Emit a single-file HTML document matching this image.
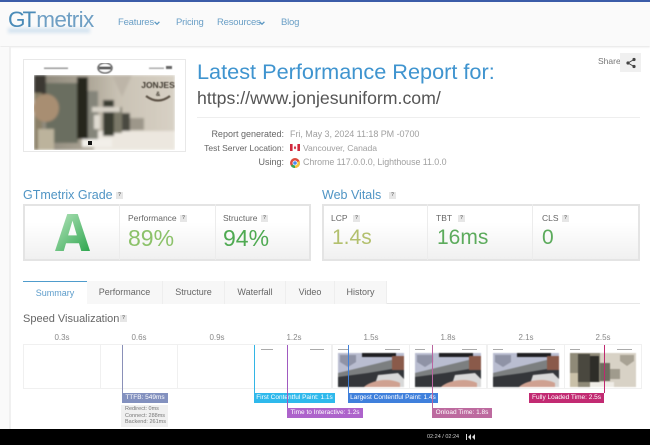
<!DOCTYPE html>
<html><head><meta charset="utf-8">
<style>
*{box-sizing:border-box}
html,body{margin:0;padding:0;background:#fff}
body{width:650px;height:445px;position:relative;overflow:hidden;font-family:"Liberation Sans",sans-serif;color:#555;filter:blur(.3px)}
.a{position:absolute;white-space:nowrap}
.q{position:absolute;width:7px;height:7px;background:#e6e6e6;color:#777;font-size:5px;line-height:7px;text-align:center;font-weight:bold}
.nav{color:#6a9fc6;font-size:9.5px;top:17px;line-height:12px;letter-spacing:-.2px}
.lab{font-size:9px;color:#666;text-align:right;right:366px;line-height:12px}
.val{font-size:9px;color:#a0a0a0;line-height:12px;letter-spacing:-.05px}
.box{position:absolute;top:204px;height:57px;border:2px solid #e4e4e4;background:linear-gradient(#fff 30%,#f0f0f0)}
.sep{position:absolute;top:204px;width:1px;height:56px;background:#ececec}
.h{font-size:12.5px;color:#4f94c4;line-height:16px;top:187px}
.sm{font-size:8.5px;color:#666;line-height:11px;top:213px}
.big{font-size:23px;line-height:26px;top:225px}
.bv{font-size:21px}
.tab{position:absolute;top:281px;height:23px;background:#f7f7f7;border-right:1px solid #eee;font-size:9px;color:#666;text-align:center;line-height:23px}
.t{font-size:8px;color:#888;top:333px;line-height:10px;text-align:center;width:30px}
.f{position:absolute;top:345px;height:43px;width:76px;background:#fff;outline:1px solid #f0f0f0;overflow:hidden}
.lg{position:absolute;width:1px}
.lb{position:absolute;height:10px;color:#fff;font-size:6.5px;line-height:10px;text-align:center;white-space:nowrap;overflow:hidden}
.sv{position:absolute;top:353px;filter:blur(.5px)}
</style></head>
<body>
<div class="a" style="left:0;top:0;width:650px;height:46px;background:#fafafa;box-shadow:0 1px 2px #e2e2e2"></div>
<div class="a" style="left:0;top:0;width:650px;height:2px;background:#3b5ca8"></div>
<div class="a" style="left:0;top:47px;width:11px;height:382px;background:#fafafa;border-right:2px solid #f0f0f0"></div>

<div class="a" style="left:8px;top:28px;width:82px;height:5px;background:#d5e4f0;filter:blur(1.5px)"></div>
<div class="a" style="left:8px;top:6px;font-size:22.5px;line-height:28px;color:#6f9fc4;letter-spacing:-.65px"><span style="color:#4a8bb8;letter-spacing:-3px">GT</span><span style="margin-left:3px">metrix</span></div>

<div class="a nav" style="left:118px">Features</div>
<svg class="a" style="left:154px;top:21px" width="6" height="4" viewBox="0 0 6 4"><path d="M.6.8 3 3.200 5.400.8" fill="none" stroke="#5b97c2" stroke-width="1.3"/></svg>
<div class="a nav" style="left:176px">Pricing</div>
<div class="a nav" style="left:217px">Resources</div>
<svg class="a" style="left:259px;top:21px" width="6" height="4" viewBox="0 0 6 4"><path d="M.6.8 3 3.200 5.400.8" fill="none" stroke="#5b97c2" stroke-width="1.3"/></svg>
<div class="a nav" style="left:281px">Blog</div>

<!-- thumbnail -->
<div class="a" style="left:23px;top:59px;width:163px;height:93px;background:#fff;border:1px solid #e8e8e8"></div>
<svg class="a" style="left:34px;top:63px" width="141" height="87" viewBox="0 0 141 87">
<defs>
<linearGradient id="bg" x1="0" x2="1" y1="0" y2="0"><stop offset="0" stop-color="#8a8578"/><stop offset=".35" stop-color="#a8a192"/><stop offset=".6" stop-color="#c9c2b4"/><stop offset="1" stop-color="#d8d1c5"/></linearGradient>
<filter id="b1"><feGaussianBlur stdDeviation="1.200"/></filter>
<filter id="b2"><feGaussianBlur stdDeviation=".4"/></filter>
<clipPath id="ci"><rect x="0" y="12" width="141" height="75"/></clipPath>
</defs>
<g clip-path="url(#ci)"><g filter="url(#b1)">
<rect x="0" y="12" width="141" height="75" fill="url(#bg)"/>
<rect x="60" y="68" width="81" height="19" fill="#ece7df"/>
<rect x="0" y="12" width="12" height="30" fill="#3b3833"/>
<rect x="12" y="20" width="32" height="60" fill="#6b6e60"/>
<rect x="0" y="30" width="8" height="57" fill="#8a8068"/>
<ellipse cx="12" cy="45" rx="13" ry="14" fill="#a88e72"/>
<rect x="4" y="66" width="16" height="21" fill="#bcb39c"/>
<rect x="43" y="14" width="11" height="62" fill="#25251f"/>
<rect x="54" y="28" width="10" height="48" fill="#85857a"/>
<rect x="69" y="37" width="11" height="36" fill="#3b3c33"/>
<rect x="80" y="44" width="8" height="26" fill="#7a7868"/>
<rect x="88" y="50" width="8" height="18" fill="#4a493f"/>
<rect x="96" y="55" width="14" height="12" fill="#9d978a"/>
<rect x="58" y="44" width="28" height="5" fill="#d8d3c8"/>
<rect x="60" y="52" width="6" height="14" fill="#e0dcd2"/>
<rect x="48" y="76" width="30" height="8" fill="#f2efe9"/>
<path d="M78 12l20 0-10 22z" fill="#bdb5a8"/>
</g>
<rect x="54" y="78" width="4" height="4" fill="#111"/>
<g filter="url(#b2)">
<text x="124" y="25" font-size="8.500" font-weight="bold" fill="#413a30" text-anchor="middle" font-family="Liberation Sans">JONJES</text>
<text x="124" y="33" font-size="6" font-weight="bold" fill="#413a30" text-anchor="middle" font-family="Liberation Sans">&amp;</text>
<path d="M112 33q12 9 24 0" fill="none" stroke="#5d5347" stroke-width="2.200"/>
</g></g>
<g filter="url(#b2)">
<rect x="10" y="4.500" width="24" height="1.500" fill="#999"/><rect x="115" y="4.500" width="15" height="1.500" fill="#aaa"/>
<rect x="132" y="3" width="6" height="3" fill="#666"/>
<ellipse cx="71" cy="5" rx="7" ry="5" fill="#fff" stroke="#666" stroke-width="1.500"/><rect x="65" y="3.500" width="12" height="3" fill="#555"/>
</g>
</svg>

<div class="a" style="left:197px;top:58px;font-size:21.700px;line-height:28px;color:#3f94cf">Latest Performance Report for:</div>
<div class="a" style="left:197px;top:86px;font-size:17.700px;line-height:24px;color:#555">https://www.jonjesuniform.com/</div>
<div class="a" style="left:197px;top:117px;width:443px;height:1px;background:#eee"></div>

<div class="a" style="left:598px;top:56px;font-size:8.500px;line-height:11px;color:#777">Share</div>
<div class="a" style="left:620px;top:53px;width:21px;height:19px;background:#f0f0f0"></div>
<svg class="a" style="left:625px;top:57px" width="12" height="12" viewBox="0 0 12 12"><path d="M9 2.500 3 6l6 3.500" fill="none" stroke="#444" stroke-width="1"/><circle cx="9" cy="2.500" r="1.600" fill="#444"/><circle cx="3" cy="6" r="1.600" fill="#444"/><circle cx="9" cy="9.500" r="1.600" fill="#444"/></svg>

<div class="a lab" style="top:128px">Report generated:</div>
<div class="a lab" style="top:142px;font-size:8.500px">Test Server Location:</div>
<div class="a lab" style="top:156px">Using:</div>
<div class="a val" style="left:290px;top:128px">Fri, May 3, 2024 11:18 PM -0700</div>
<svg class="a" style="left:290px;top:144px" width="10" height="7" viewBox="0 0 10 7"><rect width="10" height="7" fill="#fff"/><rect width="2.600" height="7" fill="#d0283c"/><rect x="7.400" width="2.600" height="7" fill="#d0283c"/><path d="M5 1.500 6.200 4 5 5.500 3.800 4z" fill="#d0283c"/></svg>
<div class="a val" style="left:303px;top:142px;font-size:8.600px">Vancouver, Canada</div>
<svg class="a" style="left:290px;top:158px" width="10" height="10" viewBox="0 0 10 10"><circle cx="5" cy="5" r="5" fill="#dd4b3e"/><path d="M5 5 .8 7.700A5 5 0 0 0 5 10z" fill="#3aa757"/><path d="M5 5 5 10A5 5 0 0 0 9.600 3z" fill="#f5c33b"/><circle cx="5" cy="5" r="2.500" fill="#fff"/><circle cx="5" cy="5" r="1.800" fill="#4a8af0"/></svg>
<div class="a val" style="left:303px;top:156px;font-size:8.900px">Chrome 117.0.0.0, Lighthouse 11.0.0</div>

<!-- grade -->
<div class="a h" style="left:23px">GTmetrix Grade</div>
<div class="q" style="left:116px;top:192px">?</div>
<div class="box" style="left:23px;width:288px"></div>
<div class="sep" style="left:119px"></div>
<div class="sep" style="left:215px"></div>
<svg class="a" style="left:55px;top:213px" width="35" height="39" viewBox="0 0 40 40" preserveAspectRatio="none"><defs><linearGradient id="ga" x1="0" x2="1" y1="0" y2="1"><stop offset="0" stop-color="#b5e4bc"/><stop offset="1" stop-color="#2fa64f"/></linearGradient></defs><path fill-rule="evenodd" d="M14 1h12l14 38H30l-2.600-8H12.600L10 39H0zM15 23h10L20 8z" fill="url(#ga)"/></svg>
<div class="a sm" style="left:128px">Performance</div>
<div class="q" style="left:180px;top:215px">?</div>
<div class="a big" style="left:128px;color:#8cc26a">89%</div>
<div class="a sm" style="left:223px">Structure</div>
<div class="q" style="left:261px;top:215px">?</div>
<div class="a big" style="left:223px;color:#4faa52">94%</div>

<!-- vitals -->
<div class="a h" style="left:322px">Web Vitals</div>
<div class="q" style="left:389px;top:192px">?</div>
<div class="box" style="left:322px;width:318px"></div>
<div class="sep" style="left:427px"></div>
<div class="sep" style="left:532px"></div>
<div class="a sm" style="left:331px">LCP</div>
<div class="q" style="left:353px;top:215px">?</div>
<div class="a big bv" style="left:332px;color:#b3c06e">1.4s</div>
<div class="a sm" style="left:436px">TBT</div>
<div class="q" style="left:458px;top:215px">?</div>
<div class="a big bv" style="left:437px;color:#5cab5c">16ms</div>
<div class="a sm" style="left:542px">CLS</div>
<div class="q" style="left:562px;top:215px">?</div>
<div class="a big bv" style="left:542px;color:#5cab5c">0</div>

<!-- tabs -->
<div class="a" style="left:23px;top:303px;width:617px;height:1px;background:#e6e6e6"></div>
<div class="tab" style="left:87px;width:76px">Performance</div>
<div class="tab" style="left:163px;width:62px">Structure</div>
<div class="tab" style="left:225px;width:61px">Waterfall</div>
<div class="tab" style="left:286px;width:49px">Video</div>
<div class="tab" style="left:335px;width:52px">History</div>
<div class="tab" style="left:23px;width:64px;background:#fff;border:0;border-top:1px solid #4f9ccc;color:#5d9dcb;height:24px">Summary</div>

<div class="a" style="left:23px;top:311px;font-size:11px;line-height:16px;color:#666">Speed Visualization</div>
<div class="q" style="left:120px;top:315px">?</div>

<div class="a t" style="left:47px">0.3s</div>
<div class="a t" style="left:124px">0.6s</div>
<div class="a t" style="left:202px">0.9s</div>
<div class="a t" style="left:279px">1.2s</div>
<div class="a t" style="left:356px">1.5s</div>
<div class="a t" style="left:433px">1.8s</div>
<div class="a t" style="left:511px">2.1s</div>
<div class="a t" style="left:588px">2.5s</div>

<div class="f" style="left:24px"></div>
<div class="f" style="left:101px"></div>
<div class="f" style="left:178px"></div>
<div class="f" style="left:255px"><div class="a" style="left:6px;top:4px;width:12px;height:1px;background:#aaa"></div><div class="a" style="left:55px;top:4px;width:14px;height:1px;background:#aaa"></div></div>
<div class="f" style="left:333px"><div class="a" style="left:5px;top:4px;width:10px;height:1px;background:#aaa"></div><div class="a" style="left:52px;top:4px;width:15px;height:1px;background:#aaa"></div></div>
<div class="f" style="left:410px"><div class="a" style="left:5px;top:4px;width:10px;height:1px;background:#aaa"></div><div class="a" style="left:52px;top:4px;width:15px;height:1px;background:#aaa"></div></div>
<div class="f" style="left:488px"><div class="a" style="left:5px;top:4px;width:10px;height:1px;background:#aaa"></div><div class="a" style="left:52px;top:4px;width:15px;height:1px;background:#aaa"></div></div>
<div class="f" style="left:565px"><div class="a" style="left:5px;top:4px;width:10px;height:1px;background:#aaa"></div><div class="a" style="left:52px;top:4px;width:15px;height:1px;background:#aaa"></div></div>

<svg class="sv" style="left:338px" width="66" height="34" viewBox="0 0 66 34"><rect width="66" height="34" fill="#b9bdd0"/><rect x="24" width="34" height="4" fill="#1f1f22"/><path d="M0 34V20L66 4V34z" fill="#7c7f80"/><path d="M0 34V24L30 20 66 14V34z" fill="#34363a"/><path d="M36 34 40 22 60 20 66 26V34z" fill="#d8d8d8"/><path d="M26 34C32 28 50 24 62 30V34z" fill="#cfa191"/><rect x="54" y="3" width="12" height="14" fill="#8a5a4a"/><path d="M2 2h16v7l-8 5-8-5z" fill="#8f93a6"/></svg>
<svg class="sv" style="left:415px" width="66" height="34" viewBox="0 0 66 34"><rect width="66" height="34" fill="#b9bdd0"/><rect x="24" width="34" height="4" fill="#1f1f22"/><path d="M0 34V20L66 4V34z" fill="#7c7f80"/><path d="M0 34V24L30 20 66 14V34z" fill="#34363a"/><path d="M36 34 40 22 60 20 66 26V34z" fill="#d8d8d8"/><path d="M26 34C32 28 50 24 62 30V34z" fill="#cfa191"/><rect x="54" y="3" width="12" height="14" fill="#8a5a4a"/><path d="M2 2h16v7l-8 5-8-5z" fill="#8f93a6"/></svg>
<svg class="sv" style="left:493px" width="66" height="34" viewBox="0 0 66 34"><rect width="66" height="34" fill="#b9bdd0"/><rect x="24" width="34" height="4" fill="#1f1f22"/><path d="M0 34V20L66 4V34z" fill="#7c7f80"/><path d="M0 34V24L30 20 66 14V34z" fill="#34363a"/><path d="M36 34 40 22 60 20 66 26V34z" fill="#d8d8d8"/><path d="M26 34C32 28 50 24 62 30V34z" fill="#cfa191"/><rect x="54" y="3" width="12" height="14" fill="#8a5a4a"/><path d="M2 2h16v7l-8 5-8-5z" fill="#8f93a6"/></svg>
<svg class="sv" style="left:570px" width="66" height="34" viewBox="0 0 66 34"><rect width="66" height="34" fill="#d8d2c6"/><rect width="30" height="34" fill="#8f8a78"/><rect x="0" y="20" width="8" height="14" fill="#c9c0a8"/><rect x="8" y="1" width="12" height="28" fill="#4a483f"/><rect x="20" y="3" width="9" height="28" fill="#2e2d28"/><rect x="30" y="10" width="10" height="18" fill="#6e6c5f"/><rect x="40" y="16" width="10" height="10" fill="#a09b8d"/><rect x="20" y="29" width="24" height="5" fill="#efece6"/><path d="M50 2h14v6l-7 5-7-5z" fill="#a8a294"/></svg>

<div class="lg" style="left:122px;top:345px;height:48px;background:#8a90b8"></div>
<div class="lb" style="left:122px;top:393px;width:46px;background:#8391bf">TTFB: 549ms</div>
<div class="a" style="left:121px;top:405px;width:47px;height:22px;background:#f0f0f0;color:#777;font-size:5.500px;line-height:6.500px;padding:1px 4px">Redirect: 0ms<br>Connect: 288ms<br>Backend: 261ms</div>

<div class="lg" style="left:254px;top:345px;height:48px;background:#33b5e5"></div>
<div class="lb" style="left:254px;top:393px;width:81px;background:#2fb9ec">First Contentful Paint: 1.1s</div>
<div class="lg" style="left:287px;top:345px;height:63px;background:#a05ac0"></div>
<div class="lb" style="left:287px;top:408px;width:76px;background:#ad63cb">Time to Interactive: 1.2s</div>
<div class="lg" style="left:348px;top:345px;height:48px;background:#3f7fd8"></div>
<div class="lb" style="left:348px;top:393px;width:90px;background:#3f80dc">Largest Contentful Paint: 1.4s</div>
<div class="lg" style="left:432px;top:345px;height:63px;background:#b9659f"></div>
<div class="lb" style="left:432px;top:408px;width:60px;background:#bd6a9f">Onload Time: 1.8s</div>
<div class="lg" style="left:604px;top:345px;height:48px;background:#c0286f"></div>
<div class="lb" style="left:529px;top:393px;width:75px;background:#c22a72">Fully Loaded Time: 2.5s</div>

<!-- bottom bar -->
<div class="a" style="left:0;top:429px;width:650px;height:16px;background:#000"></div>
<div class="a" style="left:427px;top:433px;font-size:5.500px;line-height:8px;color:#ccc">02:24 / 02:24</div>
<svg class="a" style="left:466px;top:434px" width="10" height="6" viewBox="0 0 10 6"><path d="M0 0h1v6H0zM5 0v6L2 3zM6 3l3-3v6z" fill="#ddd"/></svg>
</body></html>
